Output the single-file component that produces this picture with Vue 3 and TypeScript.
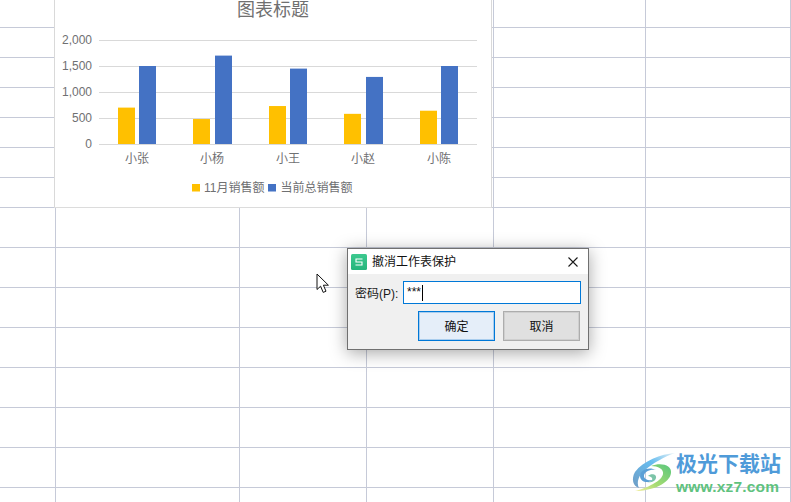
<script setup lang="ts">
interface SalesRow {
  name: string;
  month: number;
  total: number;
  x: number;
  blueX: number;
}

const colWidths = [56, 184, 127, 127, 152, 145]
const rowHeights = [28, 30, 30, 30, 30, 30, 30, 40, 40, 40, 40, 40, 40, 40, 15]

const gridStyle = {
  gridTemplateColumns: colWidths.map((w) => w + 'px').join(' '),
  gridTemplateRows: rowHeights.map((h) => h + 'px').join(' ')
}
const cellCount = colWidths.length * rowHeights.length

const sales: SalesRow[] = [
  { name: '小张', month: 700, total: 1500, x: 63, blueX: 84 },
  { name: '小杨', month: 480, total: 1700, x: 138, blueX: 160 },
  { name: '小王', month: 730, total: 1450, x: 214, blueX: 235 },
  { name: '小赵', month: 580, total: 1290, x: 289, blueX: 311 },
  { name: '小陈', month: 640, total: 1500, x: 365, blueX: 386 }
]

const ticks = [
  { label: '2,000', y: 40 },
  { label: '1,500', y: 66 },
  { label: '1,000', y: 92 },
  { label: '500', y: 118 },
  { label: '0', y: 144 }
]

const barHeight = (value: number) => (value / 500) * 26
</script>

<template>
  <div class="sheet">
    <div class="grid" :style="gridStyle">
      <div v-for="n in cellCount" :key="n" class="cell"></div>
    </div>

    <div class="chart">
      <svg width="436" height="207" viewBox="0 0 436 207">
        <text class="chart-title" x="218" y="16" text-anchor="middle">图表标题</text>
        <g v-for="t in ticks" :key="t.label">
          <line x1="44" x2="422" :y1="t.y + 0.5" :y2="t.y + 0.5" class="gridline" />
          <text class="axis-label" x="37" :y="t.y + 4" text-anchor="end">{{ t.label }}</text>
        </g>
        <g v-for="s in sales" :key="s.name">
          <rect :x="s.x" :y="144 - barHeight(s.month)" width="17" :height="barHeight(s.month)" fill="#ffc000" />
          <rect :x="s.blueX" :y="144 - barHeight(s.total)" width="17" :height="barHeight(s.total)" fill="#4472c4" />
          <text class="axis-label" :x="s.x + 19" y="163" text-anchor="middle">{{ s.name }}</text>
        </g>
        <rect x="137" y="184" width="8" height="7.5" fill="#ffc000" />
        <text class="axis-label" x="149" y="192">11月销售额</text>
        <rect x="213" y="184" width="8" height="7.5" fill="#4472c4" />
        <text class="axis-label" x="225.5" y="192">当前总销售额</text>
      </svg>
    </div>

    <svg class="cursor" width="16" height="22" viewBox="0 0 16 22">
      <path d="M1 1 L1 16.5 L4.6 13.2 L7.2 19.4 L10 18.2 L7.4 12.2 L12.4 12.2 Z" fill="#fff" stroke="#111" stroke-width="1" stroke-linejoin="miter" />
    </svg>

    <div class="dialog">
      <div class="dialog-title">
        <svg class="app-icon" width="16" height="16" viewBox="0 0 16 16">
          <defs>
            <linearGradient id="iconFill" x1="0" y1="0" x2="0" y2="1">
              <stop offset="0" stop-color="#3cc98f" />
              <stop offset="1" stop-color="#25b57c" />
            </linearGradient>
          </defs>
          <rect width="16" height="16" rx="1.5" fill="url(#iconFill)" />
          <path d="M11.5 5 H5 V8 H11 V11 H4.5" fill="none" stroke="#fff" stroke-width="1.1" />
        </svg>
        <span class="title-text">撤消工作表保护</span>
        <svg class="close" width="10" height="10" viewBox="0 0 10 10">
          <path d="M0.5 0.5 L9.5 9.5 M9.5 0.5 L0.5 9.5" stroke="#1a1a1a" stroke-width="1.1" fill="none" />
        </svg>
      </div>
      <div class="dialog-body">
        <div class="field">
          <span class="field-label">密码(P):</span>
          <div class="input"><span class="input-text">***</span><i class="caret"></i></div>
        </div>
        <div class="actions">
          <button class="btn btn-primary">确定</button>
          <button class="btn">取消</button>
        </div>
      </div>
    </div>

    <div class="watermark">
      <svg class="wm-logo" width="46" height="40" viewBox="0 0 46 40">
        <defs>
          <linearGradient id="wmBlue" x1="1" y1="0" x2="0" y2="1">
            <stop offset="0" stop-color="#e6f1f5" />
            <stop offset="0.4" stop-color="#66bdf0" />
            <stop offset="1" stop-color="#6f9cc4" />
          </linearGradient>
          <linearGradient id="wmGreen" x1="1" y1="0" x2="0" y2="1">
            <stop offset="0" stop-color="#58c67c" />
            <stop offset="0.6" stop-color="#a8dc72" />
            <stop offset="1" stop-color="#f4eea0" />
          </linearGradient>
        </defs>
        <path d="M44 1 C30 2 12 9 4 20 C0 27 2 34 8 36 C5 30 8 23 14 18 C22 11 33 5 44 1 Z" fill="url(#wmBlue)" />
        <path d="M25 18 C18 14 9 18 9 24 C9 30 17 32 22 28 C17 29 13 27 13 24 C13 20 19 17 25 18 Z" fill="#5b9fd6" />
        <path d="M17 24 C20 21 26 22 25 26 C24 30 19 31 16 30 C20 30 22 28 21 26 C20 25 19 24 17 24 Z" fill="#7cc4a8" />
        <path d="M20 14 C30 10 41 13 40 21 C39 31 22 39 4 39 C16 36 31 29 32 22 C33 17 27 14 20 14 Z" fill="url(#wmGreen)" />
      </svg>
      <div class="wm-text">
        <div class="wm-name">极光下载站</div>
        <div class="wm-url">www.xz7.com</div>
      </div>
    </div>
  </div>
</template>

<style>
html,
body {
  margin: 0;
  background: #fff;
  overflow: hidden;
}
</style>

<style scoped>
.sheet {
  position: relative;
  width: 791px;
  height: 502px;
  overflow: hidden;
  background: #fff;
  font-family: "Liberation Sans", "Noto Sans CJK SC", sans-serif;
  font-size: 12px;
  color: #1a1a1a;
}

.grid {
  display: grid;
}

.cell {
  box-sizing: border-box;
  border-right: 1px solid #c6cad8;
  border-bottom: 1px solid #c6cad8;
}

/* floating chart object on the sheet */
.chart {
  position: absolute;
  left: 54px;
  top: 0;
  width: 438px;
  height: 208px;
  box-sizing: border-box;
  background: #fff;
  border-left: 1px solid #d9d9d9;
  border-right: 1px solid #d9d9d9;
  border-bottom: 1px solid #dcdcdc;
}

.chart svg {
  display: block;
}

.chart-title {
  font-size: 18px;
  fill: #707070;
}

.axis-label {
  font-size: 12px;
  fill: #6f7072;
}

.gridline {
  stroke: #d9d9d9;
  stroke-width: 1;
}

.cursor {
  position: absolute;
  left: 316px;
  top: 273px;
}

.dialog {
  position: absolute;
  left: 347px;
  top: 248px;
  width: 242px;
  height: 102px;
  box-sizing: border-box;
  display: flex;
  flex-direction: column;
  background: #f0f0f0;
  border: 1px solid #707070;
  box-shadow: 0 3px 16px rgba(0, 0, 0, 0.35);
}

.dialog-title {
  height: 25px;
  display: flex;
  align-items: center;
  padding: 0 10px 0 3px;
  background: #fff;
}

.title-text {
  margin-left: 5px;
  padding-bottom: 2px;
  flex: 1;
  color: #111;
}

.dialog-body {
  flex: 1;
  padding: 7px 7px 0 7px;
}

.field {
  display: flex;
  align-items: center;
  height: 23px;
}

.field-label {
  width: 48px;
  padding-bottom: 1px;
}

.input {
  box-sizing: border-box;
  flex: 1;
  height: 23px;
  display: flex;
  align-items: center;
  padding-left: 3px;
  background: #fff;
  border: 1px solid #0078d7;
  color: #111;
}

.input-text {
  padding-bottom: 2px;
}

.caret {
  display: block;
  width: 1px;
  height: 16px;
  margin-left: 1px;
  background: #000;
}

.actions {
  display: flex;
  justify-content: flex-end;
  gap: 8px;
  margin-top: 7px;
  padding-right: 1px;
}

.btn {
  box-sizing: border-box;
  width: 77px;
  height: 30px;
  padding: 0 0 2px;
  border: 1px solid #adadad;
  box-shadow: inset 0 0 0 1px #cfcfcf;
  background: #e0e0e0;
  font: inherit;
  color: #111;
}

.btn-primary {
  background: #e5eef9;
  border-color: #0078d7;
  box-shadow: inset 0 0 0 1px #a9cdee;
}

.watermark {
  position: absolute;
  left: 631px;
  top: 450px;
  display: flex;
}

.wm-logo {
  display: block;
  margin-top: 2px;
}

.wm-text {
  margin-left: -1px;
  width: 112px;
}

.wm-name {
  font-family: "Noto Sans CJK SC", sans-serif;
  font-size: 21px;
  font-weight: 700;
  line-height: 24px;
  color: #4f9bd9;
}

.wm-url {
  font-family: "Liberation Sans", sans-serif;
  font-size: 15.5px;
  font-weight: 700;
  line-height: 20px;
  margin-top: 3px;
  letter-spacing: 0.2px;
  color: #5fc27e;
}
</style>
